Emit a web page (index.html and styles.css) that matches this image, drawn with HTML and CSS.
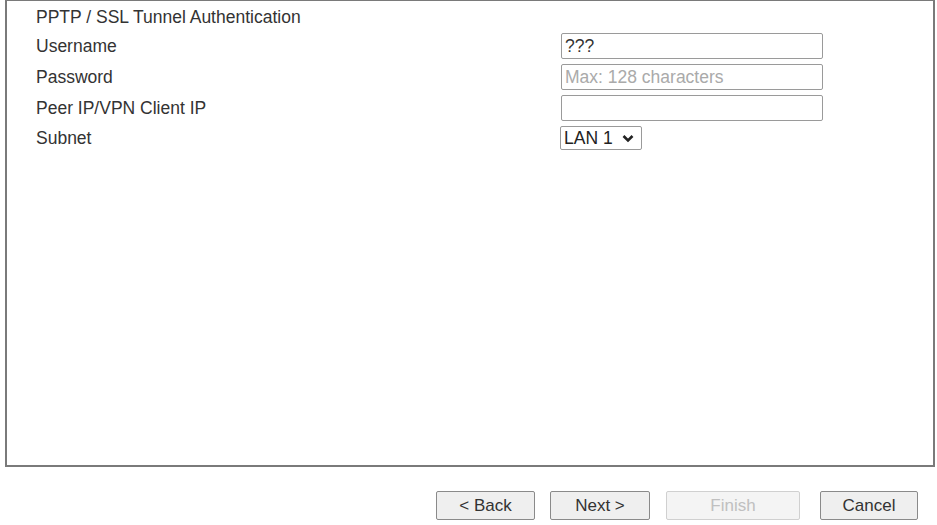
FILE: index.html
```html
<!DOCTYPE html>
<html lang="en">
<head>
  <meta charset="UTF-8">
  <title>PPTP / SSL Tunnel Authentication</title>
  <link rel="stylesheet" href="styles.css">
</head>
<body>
  <div class="panel">
    <div class="title">PPTP / SSL Tunnel Authentication</div>
    <div class="form">
      <label for="user">Username</label>
      <input id="user" type="text" value="???">

      <label for="pass">Password</label>
      <input id="pass" type="password" placeholder="Max: 128 characters">

      <label for="peer">Peer IP/VPN Client IP</label>
      <input id="peer" type="text">

      <label>Subnet</label>
      <div class="select">
        <span>LAN 1</span>
        <svg width="12" height="9" viewBox="0 0 12 9"><path d="M1.5 2 L6 6.5 L10.5 2" fill="none" stroke="#222" stroke-width="2.6"/></svg>
      </div>
    </div>
  </div>

  <div class="buttons">
    <button class="back">&lt; Back</button>
    <button class="next">Next &gt;</button>
    <button class="finish" disabled>Finish</button>
    <button class="cancel">Cancel</button>
  </div>
</body>
</html>
```

FILE: styles.css
```css
body {
  margin: 0;
  font-family: "Liberation Sans", Arial, sans-serif;
  font-size: 17.5px;
  color: #333;
  background: #fff;
}
.panel {
  height: 458px;
  margin: 0 2px 0 5px;
  border: 2px solid #7a7a7a;
  border-top-width: 1px;
  padding: 6px 0 0 29px;
  box-sizing: content-box;
}
.title {
  line-height: 20px;
  margin-bottom: 6px;
}
.form {
  display: grid;
  grid-template-columns: 525px 262px;
  row-gap: 5px;
  align-items: center;
}
.form label {
  line-height: 20px;
}
.form input {
  height: 26px;
  box-sizing: border-box;
  border: 1px solid #9a9a9a;
  border-radius: 2px;
  padding: 0 3px;
  font-family: inherit;
  font-size: 17.5px;
  color: #333;
}
.form input::placeholder {
  color: #aaa;
}
.select {
  justify-self: start;
  display: flex;
  align-items: center;
  gap: 9px;
  height: 24px;
  margin-left: -1px;
  box-sizing: border-box;
  padding: 0 7px 0 3px;
  border: 1px solid #9a9a9a;
  border-radius: 2px;
  color: #222;
}
.buttons {
  display: flex;
  justify-content: flex-end;
  padding: 24px 19px 0 0;
}
.buttons button {
  height: 29px;
  background: #efefef;
  border: 1px solid #8a8a8a;
  border-radius: 2px;
  font-family: inherit;
  font-size: 17px;
  color: #333;
}
.back {
  width: 99px;
}
.next {
  width: 100px;
  margin-left: 15px;
}
.finish {
  width: 134px;
  margin-left: 16px;
}
.cancel {
  width: 98px;
  margin-left: 20px;
}
.buttons button:disabled {
  background: #f4f4f4;
  border-color: #d0d0d0;
  color: #c0c0c0;
}
```
